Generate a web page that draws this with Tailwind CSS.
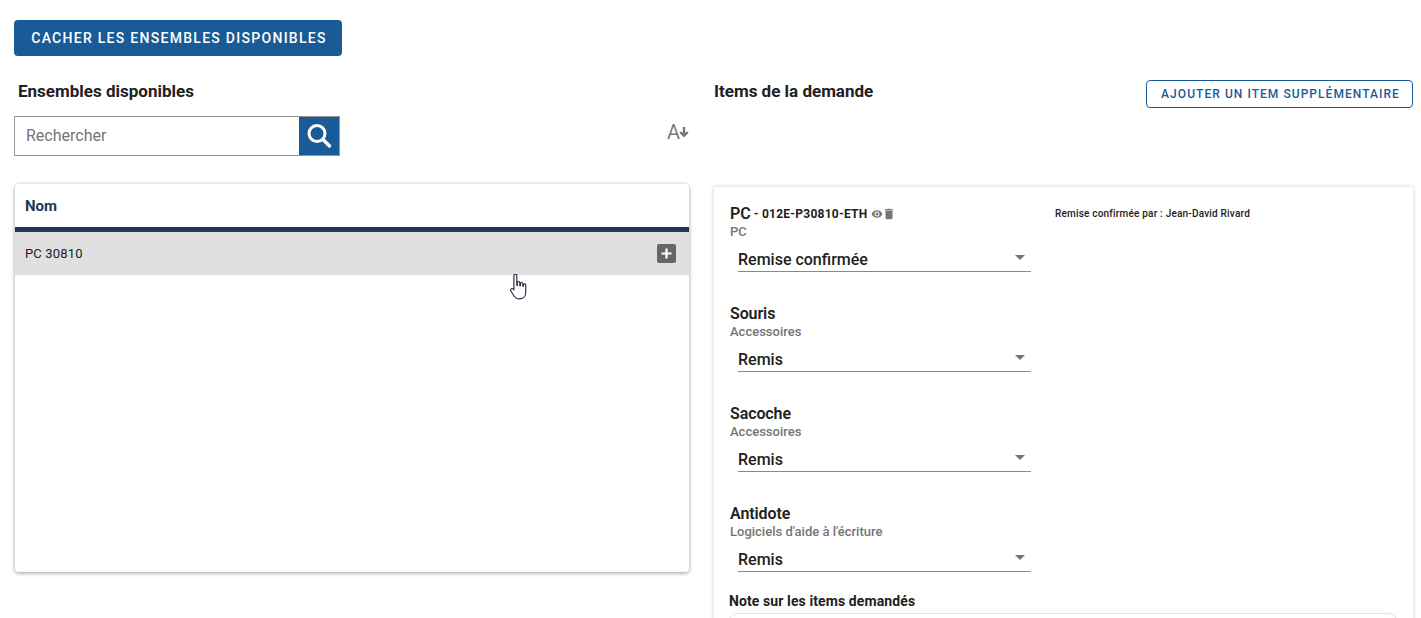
<!DOCTYPE html>
<html lang="fr">
<head>
    <meta charset="UTF-8">
    <title>Items de la demande</title>
    <script src="https://cdn.jsdelivr.net/npm/@tailwindcss/browser@4"></script>
</head>
<body class="h-[618px] overflow-hidden bg-white font-['Roboto',sans-serif] text-[#212121]">
    <div class="relative h-[618px] overflow-hidden pt-5 pl-[14px] pr-2">
        <button class="block h-9 w-[328px] rounded-[4px] bg-[#1a5a96] pl-[2px] text-center text-sm leading-9 font-medium tracking-[1.28px] text-white">CACHER LES ENSEMBLES DISPONIBLES</button>

        <div class="mt-[24px] flex gap-6">
            <!-- Left column -->
            <div class="w-[676px] shrink-0">
                <h2 class="pl-1 text-[17px] leading-[22px] font-bold">Ensembles disponibles</h2>
                <div class="mt-[14px] flex items-start justify-between">
                    <div class="flex h-10 w-[326px] border border-[#979797]">
                        <input class="h-full min-w-0 flex-1 bg-white pb-0.5 pl-[11px] text-base text-[#6e6e6e] placeholder:text-[#757575] outline-none" placeholder="Rechercher">
                        <span class="flex w-10 items-center justify-center bg-[#1a5a96]">
                            <svg width="28" height="28" viewBox="0 0 28 28" fill="none" stroke="#fff" stroke-width="3"><circle cx="12" cy="11.5" r="8"/><path d="M18 17.500 25.500 25" stroke-width="3.400"/></svg>
                        </span>
                    </div>
                    <span class="mt-[4px] flex items-center text-[#7a7a7a]">
                        <span class="text-[20px] leading-[24px]">A</span>
                        <svg class="-mt-px -ml-0.5" width="12" height="12" viewBox="0 0 11 11" fill="none" stroke="#7a7a7a" stroke-width="2.200"><path d="M5.500 1v8M2 5.500l3.500 3.500L9 5.500"/></svg>
                    </span>
                </div>

                <div class="mx-px mt-7 h-[388px] rounded-[4px] bg-white shadow-[0_1px_4px_rgba(0,0,0,0.4)]">
                    <div class="h-[48px] border-b-[5px] border-[#25355a] px-[10px] pt-[12px] text-[15px] leading-5 font-bold text-[#25355a]">Nom</div>
                    <div class="flex h-[43px] items-center justify-between bg-[#e0e0e0] pr-[13px] pl-[10px] text-[13px] tracking-[0.15px]">
                        <span>PC 30810</span>
                        <span class="flex size-[19px] items-center justify-center rounded-[2px] bg-[#666]">
                            <svg width="13" height="13" viewBox="0 0 13 13" stroke="#fff" stroke-width="2.200"><path d="M6.500 1.500v10M1.500 6.500h10"/></svg>
                        </span>
                    </div>
                </div>
            </div>

            <!-- Right column -->
            <div class="w-[699px] shrink-0">
                <div class="flex items-start justify-between">
                    <h2 class="text-[17px] leading-[22px] font-bold">Items de la demande</h2>
                    <button class="h-7 w-[267px] rounded-[4px] border border-[#1a5a96] pl-[2px] text-center text-xs leading-[26px] font-medium tracking-[1.05px] text-[#1a5a96]">AJOUTER UN ITEM SUPPLÉMENTAIRE</button>
                </div>

                <div class="mt-[79px] h-[600px] rounded-[2px] bg-white px-[16px] pt-[17px] shadow-[0_0_5px_rgba(0,0,0,0.2)]">
                    <div class="flex h-[100px] items-start">
                        <div class="w-[325px] shrink-0">
                            <div class="flex h-[20px] items-center font-semibold">
                                <span class="text-base leading-5">PC</span>
                                <span class="ml-[3px] text-xs font-bold tracking-[0.25px]">- 012E-P30810-ETH</span>
                                <svg class="ml-[3px]" width="12" height="12" viewBox="0 0 24 24" fill="#757575"><path d="M12 4.500C7 4.500 2.700 7.600 1 12c1.700 4.400 6 7.500 11 7.500s9.300-3.100 11-7.500c-1.700-4.400-6-7.500-11-7.500zM12 17a5 5 0 1 1 0-10 5 5 0 0 1 0 10zm0-8a3 3 0 1 0 0 6 3 3 0 0 0 0-6z"/></svg>
                                <svg class="-ml-px" width="14" height="14" viewBox="0 0 24 24" fill="#757575"><path d="M6 19c0 1.100.9 2 2 2h8c1.100 0 2-.9 2-2V7H6v12zM19 4h-3.500l-1-1h-5l-1 1H5v2h14V4z"/></svg>
                            </div>
                            <div class="text-[13px] leading-[16px] font-medium text-[#757575]">PC</div>
                            <div class="relative mt-[8px] ml-2 h-[24px] w-[293px] border-b border-[#8a8a8a] text-base leading-[23px] font-medium">
                                Remise confirmée
                                <span class="absolute top-[7px] right-[6px] border-x-[5px] border-t-[5px] border-x-transparent border-t-[#757575]"></span>
                            </div>
                        </div>
                        <div class="pt-[4px] text-[10px] leading-3 font-medium tracking-[0.2px]">Remise confirmée par : Jean-David Rivard</div>
                    </div>

                    <div class="h-[100px] w-[325px]">
                        <div class="h-[20px] text-base leading-5 font-semibold tracking-[-0.1px]">Souris</div>
                        <div class="text-[13px] leading-[16px] font-medium text-[#757575]">Accessoires</div>
                        <div class="relative mt-[8px] ml-2 h-[24px] w-[293px] border-b border-[#8a8a8a] text-base leading-[23px] font-medium">
                            Remis
                            <span class="absolute top-[7px] right-[6px] border-x-[5px] border-t-[5px] border-x-transparent border-t-[#757575]"></span>
                        </div>
                    </div>

                    <div class="h-[100px] w-[325px]">
                        <div class="h-[20px] text-base leading-5 font-semibold tracking-[-0.1px]">Sacoche</div>
                        <div class="text-[13px] leading-[16px] font-medium text-[#757575]">Accessoires</div>
                        <div class="relative mt-[8px] ml-2 h-[24px] w-[293px] border-b border-[#8a8a8a] text-base leading-[23px] font-medium">
                            Remis
                            <span class="absolute top-[7px] right-[6px] border-x-[5px] border-t-[5px] border-x-transparent border-t-[#757575]"></span>
                        </div>
                    </div>

                    <div class="h-[88px] w-[325px]">
                        <div class="h-[20px] text-base leading-5 font-semibold tracking-[-0.1px]">Antidote</div>
                        <div class="text-[13px] leading-[16px] font-medium text-[#757575]">Logiciels d'aide à l'écriture</div>
                        <div class="relative mt-[8px] ml-2 h-[24px] w-[293px] border-b border-[#8a8a8a] text-base leading-[23px] font-medium">
                            Remis
                            <span class="absolute top-[7px] right-[6px] border-x-[5px] border-t-[5px] border-x-transparent border-t-[#757575]"></span>
                        </div>
                    </div>

                    <div class="-ml-px text-sm leading-[18px] font-bold tracking-[0.1px]">Note sur les items demandés</div>
                    <div class="-ml-px mt-[3px] h-20 rounded-lg border border-[#e4e4e4]"></div>
                </div>
            </div>
        </div>

        <!-- mouse pointer over the page -->
        <svg class="absolute top-[274px] left-[510px]" width="19" height="26" viewBox="0 1 17 23.500" fill="#fff" stroke="#22263a" stroke-width="1" stroke-linejoin="round" preserveAspectRatio="none"><path d="M3.500 2.400c0-1.600 2.600-1.600 2.600 0v9.100l.5-.1V8.800c0-1.300 2.200-1.300 2.200 0v2.900l.5.100V9.700c0-1.300 2.200-1.300 2.200 0v2.300l.5.100v-1.200c0-1.300 2.100-1.300 2.100.1v6.600c0 3.300-2 5.900-5.300 5.900-2.600 0-4.200-1-5.400-2.900L.8 16.300c-.9-1.500 1-2.900 2.200-1.700l.5.8z"/></svg>
    </div>
</body>
</html>
